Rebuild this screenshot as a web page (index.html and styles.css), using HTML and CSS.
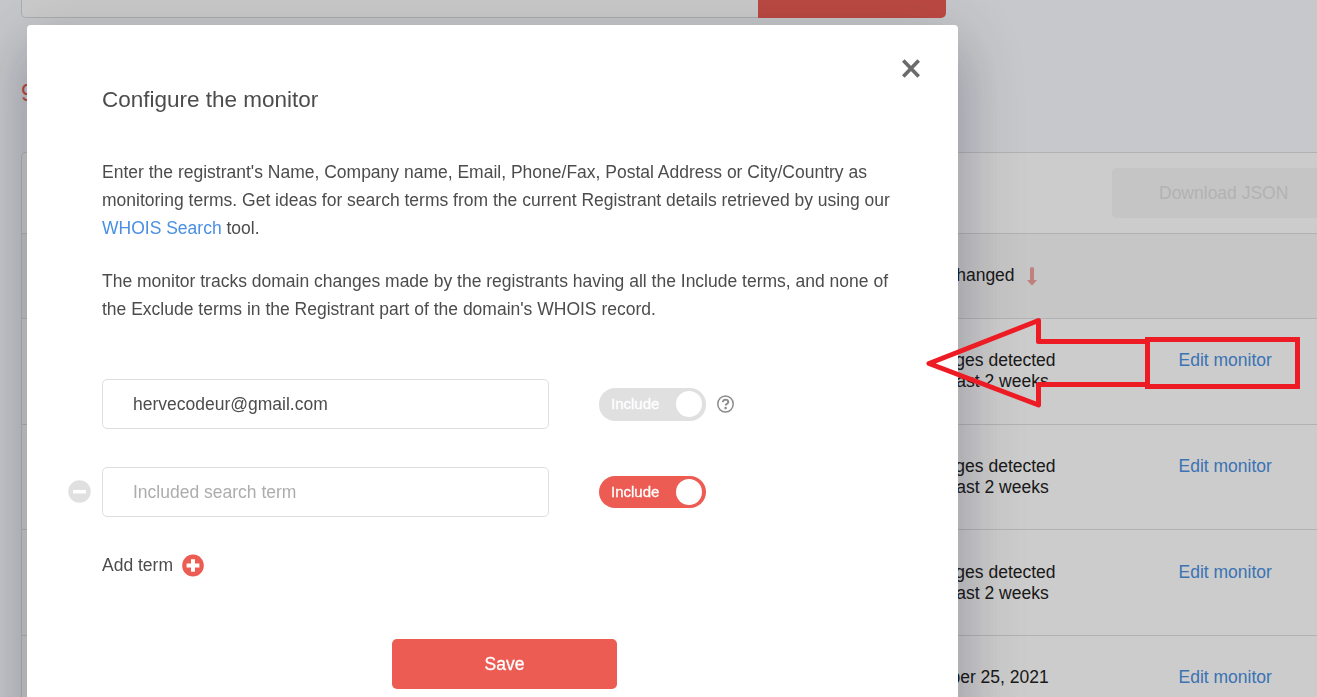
FILE: index.html
```
<!DOCTYPE html>
<html lang="en">
<head>
    <meta charset="UTF-8">
    <meta name="viewport" content="width=device-width, initial-scale=1.0">
    <title>Registrant Monitor</title>
    <link rel="stylesheet" href="styles.css">
</head>
<body>
    <!-- Page behind the dialog -->
    <div class="page">
        <div class="search">
            <div class="search-field"></div>
            <div class="search-button"></div>
        </div>
        <div class="count">9</div>

        <div class="table">
            <div class="toolbar">
                <button class="download" disabled>Download JSON</button>
            </div>
            <div class="row head">
                <div class="head-cell">Last changed
                    <svg class="sort" width="10" height="19" viewBox="0 0 10 19">
                        <path d="M3 1.200q0-1 2-1t2 1V13H9q1 0 .4.8L5.6 18q-.6.6-1.200 0L.6 13.800Q0 13 1 13h2z" fill="#f1a09b"/>
                    </svg>
                </div>
            </div>
            <div class="row">
                <div>Changes detected<br>over last 2 weeks</div>
                <a href="#">Edit monitor</a>
            </div>
            <div class="row">
                <div>Changes detected<br>over last 2 weeks</div>
                <a href="#">Edit monitor</a>
            </div>
            <div class="row">
                <div>Changes detected<br>over last 2 weeks</div>
                <a href="#">Edit monitor</a>
            </div>
            <div class="row">
                <div>October 25, 2021</div>
                <a href="#">Edit monitor</a>
            </div>
        </div>
    </div>

    <!-- Dialog -->
    <div class="overlay">
        <div class="modal">
            <button class="close" aria-label="Close">
                <svg width="18" height="19" viewBox="0 0 18 19">
                    <path d="M1.3 1.5l15.4 16M16.7 1.5l-15.4 16" stroke="#6b6b6b" stroke-width="3.7"/>
                </svg>
            </button>
            <h2>Configure the monitor</h2>
            <p>Enter the registrant's Name, Company name, Email, Phone/Fax, Postal Address or City/Country as monitoring terms. Get ideas for search terms from the current Registrant details retrieved by using our <a href="#">WHOIS Search</a> tool.</p>
            <p>The monitor tracks domain changes made by the registrants having all the Include terms, and none of the Exclude terms in the Registrant part of the domain's WHOIS record.</p>

            <div class="terms">
                <div class="term">
                    <span class="remove"></span>
                    <input type="text" value="hervecodeur@gmail.com">
                    <div class="switch disabled"><span>Include</span><i></i></div>
                    <svg class="help" width="17" height="18" viewBox="0 0 17 18">
                        <ellipse cx="8.5" cy="9" rx="7.7" ry="8.1" fill="none" stroke="#8c8c8c" stroke-width="1.5"/>
                        <path d="M5.800 7.100Q6.100 4.600 8.600 4.600q2.700.1 2.700 2.300 0 1.200-1.400 1.900-1.200.6-1.200 1.700" fill="none" stroke="#8c8c8c" stroke-width="1.9"/>
                        <circle cx="8.6" cy="13.1" r="1.300" fill="#8c8c8c"/>
                    </svg>
                </div>
                <div class="term">
                    <svg class="remove" width="23" height="23" viewBox="0 0 23 23">
                        <circle cx="11.5" cy="11.5" r="11.2" fill="#e0e0e0"/>
                        <rect x="5" y="10" width="13" height="3.4" rx=".5" fill="#fff"/>
                    </svg>
                    <input type="text" placeholder="Included search term">
                    <div class="switch"><span>Include</span><i></i></div>
                </div>
            </div>

            <div class="add">
                <span>Add term</span>
                <svg width="22" height="23" viewBox="0 0 22 23">
                    <ellipse cx="11" cy="11.5" rx="10.8" ry="11.1" fill="#ed5c53"/>
                    <path d="M11 5.2v12.6M4.6 11.5h12.8" stroke="#fff" stroke-width="4"/>
                </svg>
            </div>
            <button class="save">Save</button>
        </div>
    </div>

    <!-- Arrow and frame drawn over the page -->
    <svg class="marker" width="380" height="96" viewBox="0 0 380 96">
        <path d="M227 27.5H118.500V6.500L9 49.500l109.500 41.500V70.500H227" fill="none" stroke="#ed1c24" stroke-width="5" stroke-linejoin="round"/>
        <rect x="227.5" y="25.5" width="150" height="47" fill="none" stroke="#ed1c24" stroke-width="5"/>
    </svg>
</body>
</html>
```

FILE: styles.css
```
* {
    box-sizing: border-box;
}
body {
    margin: 0;
    height: 100vh;
    overflow: hidden;
    background: #f8fafe;
    color: #222;
    font-family: "Liberation Sans", Arial, sans-serif;
    font-size: 17.5px;
    line-height: 21px;
}
a {
    color: #4a90e2;
    text-decoration: none;
}
button, input {
    font-family: inherit;
    font-size: inherit;
}
.page {
    height: 697px;
    overflow: hidden;
    padding-left: 21px;
}
.search {
    display: flex;
    width: 925px;
    height: 18px;
}
.search-field {
    flex: 1;
    background: #fff;
    border: 1px solid #dadada;
    border-width: 0 0 1px 1px;
    border-radius: 0 0 0 5px;
}
.search-button {
    width: 188px;
    background: #ed5c53;
    border-radius: 0 0 5px 0;
}
.count {
    margin-top: 62px;
    height: 72px;
    color: #ed5c53;
    font-size: 24px;
    line-height: 26px;
}
.table {
    width: 1400px;
    background: #fff;
    border: 1px solid #dedfe0;
    border-radius: 5px;
}
.toolbar {
    height: 80px;
    padding: 15px 0 0 1090px;
}
.download {
    width: 260px;
    height: 50px;
    padding: 0 0 0 47px;
    border: 0;
    border-radius: 5px;
    background: #f7f7f7;
    color: #dfdfdf;
    text-align: left;
}
.row {
    display: grid;
    grid-template-columns: 265px 1fr;
    height: 105.7px;
    padding: 31.3px 0 0 891.5px;
    border-top: 1px solid #dedfe0;
}
.row.head {
    height: 85px;
    background: #f8f8f8;
}
.head-cell {
    display: flex;
    gap: 12px;
    margin-left: -4px;
}
.sort {
    margin-top: 2px;
}

.overlay {
    position: fixed;
    top: 0;
    left: 0;
    width: 100%;
    height: 100%;
    overflow: hidden;
    padding: 25px 0 0 27px;
    background: rgba(0, 0, 0, 0.2);
}
.modal {
    position: relative;
    width: 931px;
    height: 760px;
    padding: 61px 60px 0 75px;
    background: #fff;
    border-radius: 4px;
    color: #4c4c4c;
    box-shadow: 0 14px 19px -9px rgba(0, 0, 0, 0.04), 0 30px 48px 4px rgba(10, 20, 40, 0.12), 0 11px 75px 10px rgba(10, 20, 40, 0.14);
}
.close {
    position: absolute;
    top: 34px;
    right: 38px;
    padding: 0;
    border: 0;
    background: none;
    line-height: 0;
}
.modal h2 {
    margin: 0 0 44px;
    font-size: 22.5px;
    font-weight: normal;
    line-height: 28px;
}
.modal p {
    margin: 0 0 25px;
    line-height: 28px;
}
.terms {
    display: flex;
    flex-direction: column;
    gap: 38px;
    margin-top: 56px;
}
.term {
    display: flex;
    align-items: center;
    margin-left: -34px;
}
.remove {
    width: 23px;
    margin: 0 11px 2px 0;
}
.term input {
    width: 447px;
    height: 50px;
    margin-right: 50px;
    padding: 0 30px;
    border: 1px solid #dedede;
    border-radius: 5px;
    background: #fff;
    color: #4c4c4c;
}
.term input::placeholder {
    color: #adadad;
}
.switch {
    display: flex;
    align-items: center;
    justify-content: space-between;
    width: 107px;
    height: 32px;
    padding: 0 4px 0 12px;
    border-radius: 16px;
    background: #ed5c53;
    color: #fff;
    font-size: 15px;
    -webkit-text-stroke: 0.3px #fff;
}
.switch span {
    padding-bottom: 2px;
}
.switch i {
    width: 26px;
    height: 26px;
    border-radius: 50%;
    background: #fff;
}
.switch.disabled {
    height: 33px;
    background: #e0e0e0;
}
.help {
    margin-left: 11px;
}
.add {
    display: flex;
    align-items: center;
    gap: 9px;
    margin-top: 37px;
}
.save {
    display: block;
    width: 225px;
    height: 50px;
    margin: 62px 0 0 290px;
    border: 0;
    border-radius: 5px;
    background: #ed5c53;
    color: #fff;
    -webkit-text-stroke: 0.3px #fff;
}
.marker {
    position: absolute;
    top: 314px;
    left: 920px;
}
```
